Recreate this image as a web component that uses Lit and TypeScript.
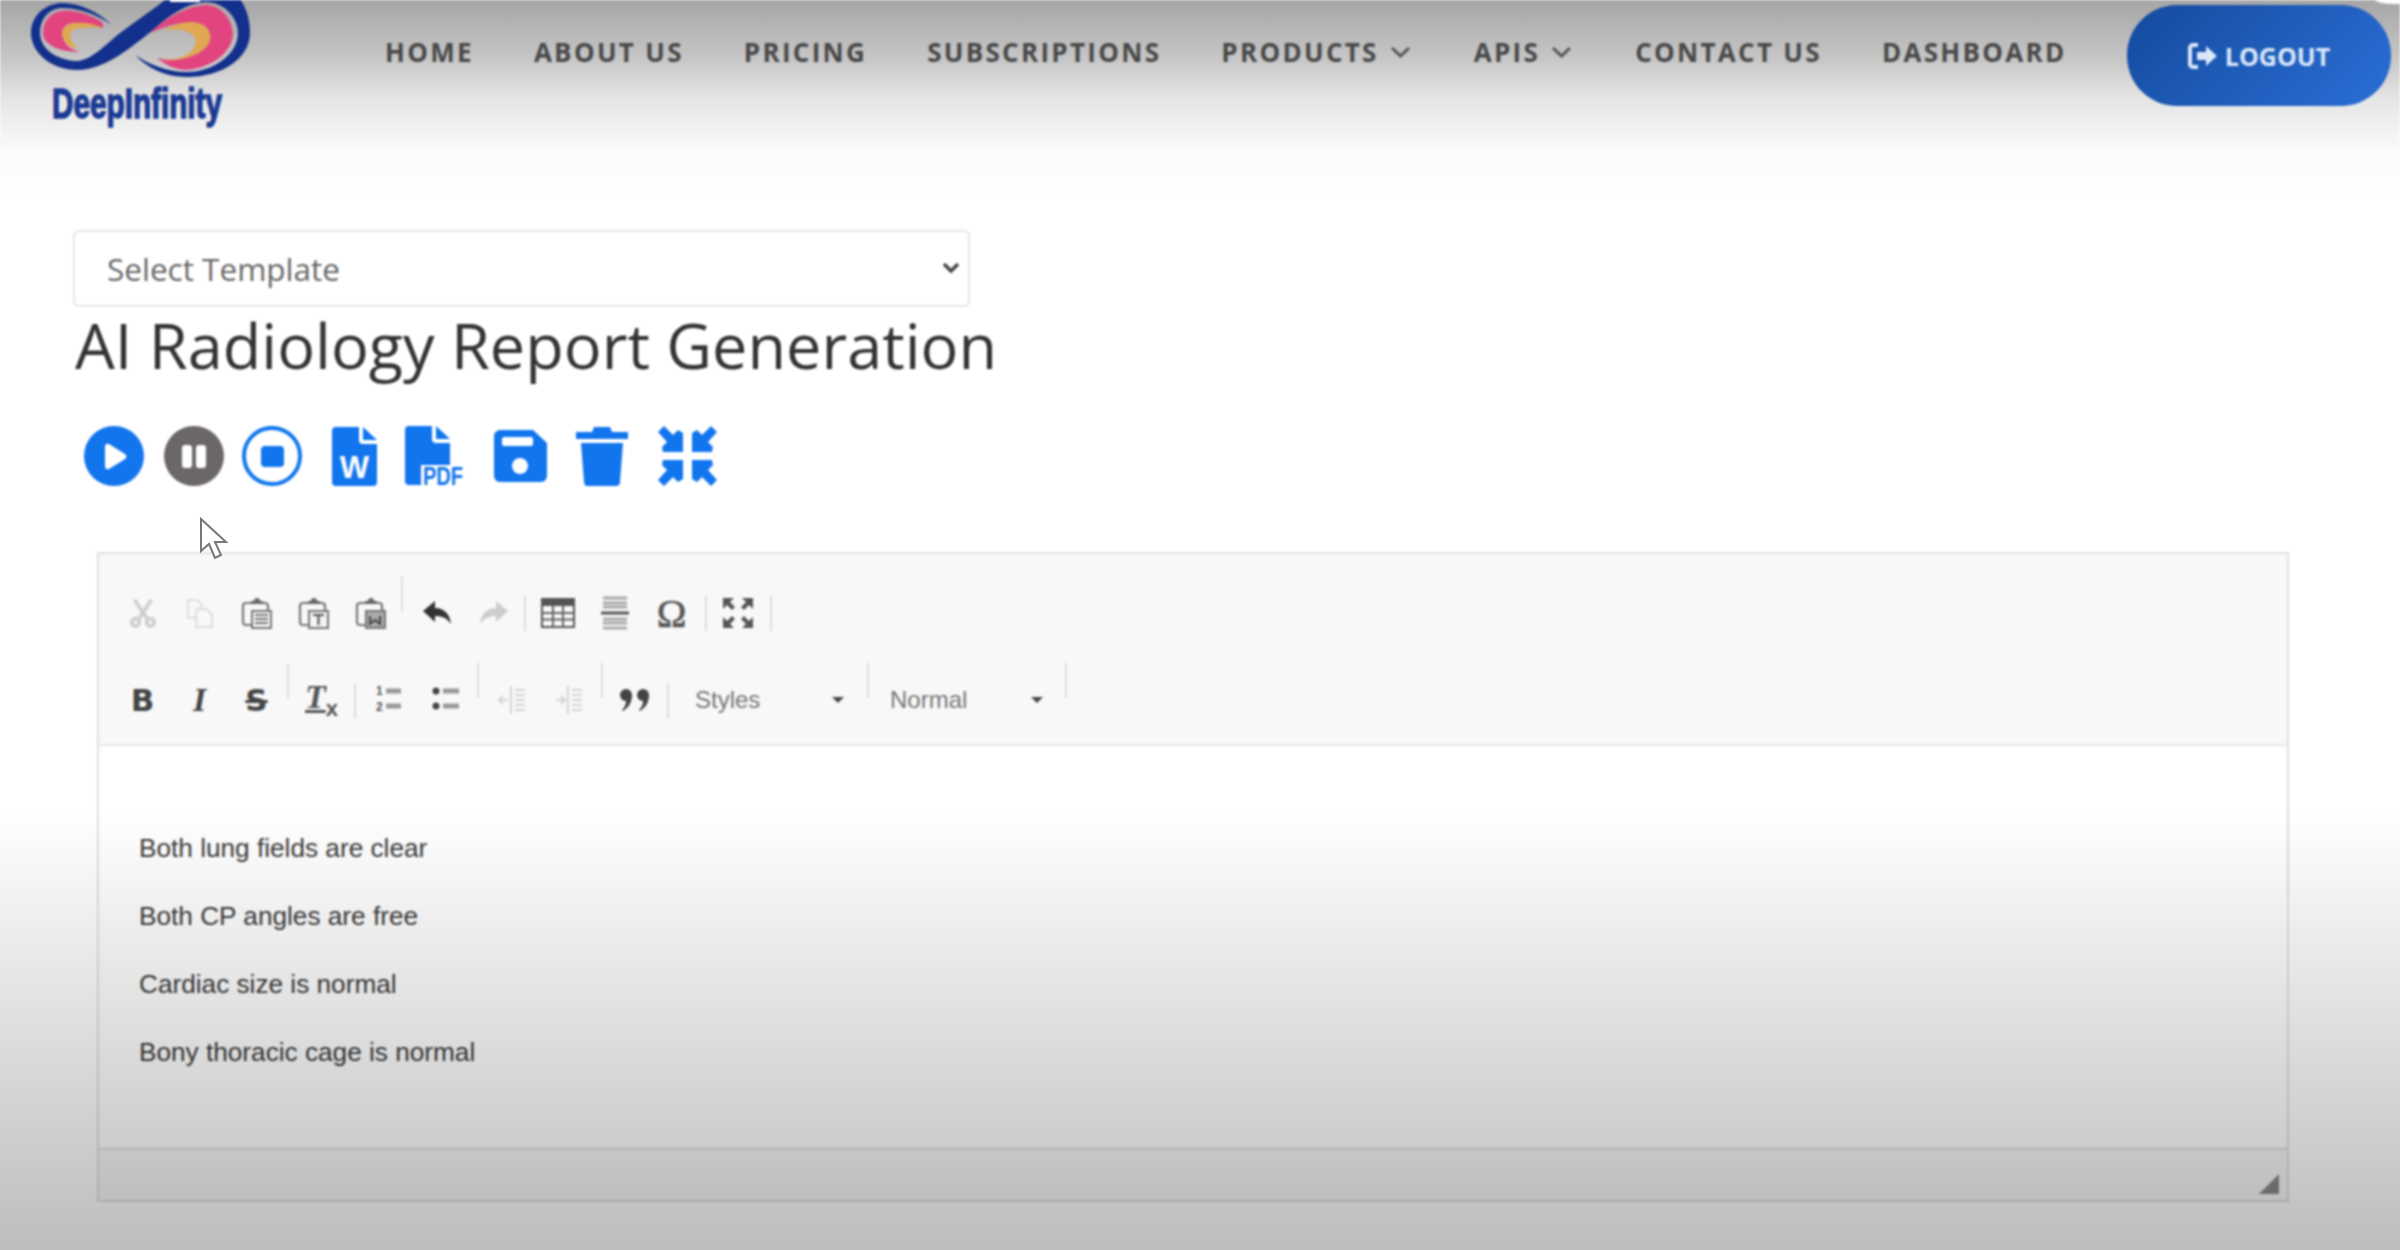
import { LitElement, html, css, svg } from "lit";
import { customElement } from "lit/decorators.js";

const ic = (w: number, h: number, vb: string, body: unknown, cls = "") =>
  html`<svg class=${cls} width=${w} height=${h} viewBox=${vb}>${body}</svg>`;

const clip = (inner: unknown) => svg`
  <path d="M5 6h5M22 6h2a3 3 0 0 1 3 3v5M5 6a3 3 0 0 0-3 3v16a3 3 0 0 0 3 3h5" fill="none" stroke="#777" stroke-width="2.2"/>
  <path d="M10 7V4h3a3 3 0 0 1 6 0h3v3z" fill="#666"/>
  <rect x="11" y="14" width="19" height="17" fill="#f4f4f4" stroke="#777" stroke-width="2"/>
  ${inner}`;

const TB: Record<string, unknown> = {
  cut: ic(30, 32, "0 0 32 32", svg`<g fill="none" stroke="#cfcfcf" stroke-width="4"><path d="M7 2l14 21M25 2L11 23"/><circle cx="8" cy="26" r="4"/><circle cx="24" cy="26" r="4"/></g>`),
  copy: ic(30, 32, "0 0 32 32", svg`<g fill="#f8f8f8" stroke="#dcdcdc" stroke-width="2"><path d="M3 2h10l5 5v14H3z"/><path d="M12 12h11l6 6v13H12z"/></g>`),
  p1: ic(32, 32, "0 0 32 32", clip(svg`<path d="M14 18h13M14 22h13M14 26h13" stroke="#777" stroke-width="2"/>`)),
  p2: ic(32, 32, "0 0 32 32", clip(svg`<path d="M15 18h11M20.500 18v10" stroke="#555" stroke-width="2.200"/>`)),
  p3: ic(32, 32, "0 0 32 32", clip(svg`<rect x="12" y="15" width="17" height="15" fill="#aaa"/><path d="M15 19v8l5-4 5 4v-8" fill="none" stroke="#444" stroke-width="2"/>`)),
  undo: ic(32, 32, "0 0 32 32", svg`<path d="M2 14L14 4v7c9 0 15 6 16 16-4-6-9-8-16-8v6z" fill="#333"/>`),
  redo: ic(32, 32, "0 0 32 32", svg`<path d="M30 14L18 4v7C9 11 3 17 2 27c4-6 9-8 16-8v6z" fill="#cdcdcd"/>`),
  table: ic(34, 30, "0 0 34 30", svg`<rect x="0" y="0" width="34" height="30" fill="#555"/><rect x="2" y="8" width="30" height="20" fill="#f8f8f8"/><path d="M12 8v20M22 8v20M2 15h30M2 21.500h30" stroke="#666" stroke-width="2"/>`),
  hr: ic(28, 34, "0 0 28 34", svg`<path d="M2 2h24M2 7h24M2 11h24M2 23h24M2 27h24M2 32h24" stroke="#aaa" stroke-width="3"/><path d="M0 17h28" stroke="#555" stroke-width="3"/>`),
  omega: html`<span class="omega">Ω</span>`,
  max: ic(32, 32, "0 0 32 32", svg`<g fill="#555"><path d="M1 1h11L8 5l5 5-3 3-5-5-4 4zM31 1H20l4 4-5 5 3 3 5-5 4 4zM1 31h11l-4-4 5-5-3-3-5 5-4-4zM31 31H20l4-4-5-5 3-3 5 5 4-4z"/></g>`),
  b: html`<span class="fmt bold">B</span>`,
  i: html`<span class="fmt ital">I</span>`,
  s: html`<span class="fmt strike">S</span>`,
  tx: html`<span class="fmt ital tx">T<sub>x</sub></span>`,
  ol: ic(28, 28, "0 0 28 28", svg`<path d="M11 5h15M11 20h15" stroke="#999" stroke-width="5"/><text x="1" y="9" class="nm">1</text><text x="1" y="25" class="nm">2</text>`),
  ul: ic(28, 28, "0 0 28 28", svg`<path d="M11 5h16M11 20h16" stroke="#999" stroke-width="5"/><circle cx="4" cy="5" r="3.500" fill="#444"/><circle cx="4" cy="20" r="3.500" fill="#444"/>`),
  out: ic(30, 30, "0 0 30 30", svg`<g stroke="#d4d4d4" stroke-width="2" fill="none"><path d="M14 1v28M18 5h10M18 10h10M18 15h10M18 20h10M18 25h10M2 15h9"/><path d="M6 11l-4 4 4 4"/></g>`),
  ind: ic(30, 30, "0 0 30 30", svg`<g stroke="#d4d4d4" stroke-width="2" fill="none"><path d="M14 1v28M18 5h10M18 10h10M18 15h10M18 20h10M18 25h10M2 15h9"/><path d="M7 11l4 4-4 4"/></g>`),
  quote: ic(32, 24, "0 0 32 24", svg`<g fill="#444"><circle cx="7" cy="7" r="6"/><path d="M13 7c0 8-4 13-9 16l-1-1c3-3 4-6 4-9z"/><circle cx="24" cy="7" r="6"/><path d="M30 7c0 8-4 13-9 16l-1-1c3-3 4-6 4-9z"/></g>`),
};

const NAV: [string, boolean][] = [
  ["HOME", false], ["ABOUT US", false], ["PRICING", false], ["SUBSCRIPTIONS", false],
  ["PRODUCTS", true], ["APIS", true], ["CONTACT US", false], ["DASHBOARD", false],
];

const DOC = "M4 0H27V13a4 4 0 0 0 4 4H45V55a4 4 0 0 1-4 4H4a4 4 0 0 1-4-4V4a4 4 0 0 1 4-4z";
const FOLD = "M31 0l14 13H31z";

@customElement("app-root")
export class AppRoot extends LitElement {
  static styles = css`
    :host { display: block; width: 2400px; height: 1250px; position: relative; overflow: hidden; background: #fff; font-family: "Open Sans", sans-serif; }
    .page { filter: blur(0.8px); height: 1250px; background: linear-gradient(#a6a6a6, #c7c7c7 60px, #e6e6e6 100px, #f7f7f7 143px, #fbfbfb 147px, #fff 200px); }
    header { height: 145px; display: flex; align-items: flex-start; }
    .logo { flex: none; display: block; }
    nav { display: flex; gap: 60px; margin-left: 125px; margin-top: 31px; align-items: center; height: 42px; }
    .nav-item { font-size: 26px; font-weight: 700; letter-spacing: 2.300px; color: #484848; display: flex; align-items: center; gap: 11px; white-space: nowrap; font-family: "Open Sans", sans-serif; }
    .nav-item.has-chev { margin-right: 3px; }
    .logout { position: absolute; left: 2127px; top: 5px; width: 264px; height: 101px; border-radius: 50px; background: linear-gradient(135deg, #144a9e, #2a6fd6); color: #dbe7fa; display: flex; align-items: center; justify-content: center; gap: 7px; font-size: 25px; font-weight: 700; box-sizing: border-box; }
    .spot { position: absolute; background: #fff; border-radius: 50%; }
    .spot.a { left: 2375px; top: -5px; width: 40px; height: 9px; }
    .body { padding-left: 73px; padding-top: 85px; }
    .select-wrap { position: relative; width: 897px; height: 77px; }
    select { appearance: none; width: 100%; height: 100%; border: 2px solid #e6e6e6; border-radius: 6px; background: #fff; font: 400 31.500px "Open Sans", sans-serif; color: #666; padding: 0 32px; }
    .chev { position: absolute; right: 9px; top: 31px; pointer-events: none; }
    h1 { margin: 0; font: 400 63px/76px "Open Sans", sans-serif; color: #333; padding-left: 2px; }
    .actions { display: flex; align-items: center; margin: 43px 0 0 11px; height: 60px; }
    .actions svg { display: block; flex: none; }
    .gap-20 { margin-left: 20px; } .gap-18 { margin-left: 18px; } .gap-30 { margin-left: 30px; } .gap-28 { margin-left: 28px; } .gap-29 { margin-left: 29px; }
    .editor { margin: 66px 0 0 24px; width: 2192px; border: 2px solid #e0e0e0; box-sizing: border-box; height: 650px; display: flex; flex-direction: column; font-family: "Liberation Sans", Arial, sans-serif; background: #fff; }
    .toolbar { background: #f8f8f8; height: 192px; flex: none; box-sizing: border-box; padding: 31px 0 0 15px; border-bottom: 2px solid #e8e8e8; }
    .row { display: flex; align-items: center; height: 56px; }
    .row + .row { margin-top: 31px; }
    .btn { width: 57px; height: 56px; flex: none; display: flex; align-items: center; justify-content: center; color: #474747; }
    .sep { width: 2px; height: 35px; background: #dcdcdc; flex: none; }
    .up { margin-bottom: 40px; }
    .omega { font: 400 40px "Liberation Serif", serif; color: #555; -webkit-text-stroke: 0.6px #555; }
    .fmt { font-size: 32px; line-height: 1; color: #444; }
    .bold { font-weight: 700; font-family: "DejaVu Sans", sans-serif; font-size: 31px; }
    .ital { font: italic 700 34px "Liberation Serif", serif; }
    .strike { font-family: "DejaVu Sans", sans-serif; font-weight: 700; font-size: 31px; text-decoration: line-through; }
    .tx { text-decoration: underline; color: #555; }
    .tx sub { font: 700 22px "Liberation Sans", sans-serif; }
    .combo { height: 56px; flex: none; display: flex; align-items: center; justify-content: space-between; box-sizing: border-box; font-size: 24px; color: #777; }
    .caret { width: 0; height: 0; border: 6px solid transparent; border-top-color: #444; border-bottom: 0; }
    .nm { font: 700 12px "Liberation Sans", sans-serif; fill: #555; }
    .content { flex: 1; padding: 84px 40px 0; font-size: 26.200px; color: #3c3c3c; }
    .content p { margin: 0 0 32px; line-height: 36px; }
    .status { height: 52px; flex: none; background: #f8f8f8; border-top: 2px solid #e0e0e0; box-sizing: border-box; display: flex; justify-content: flex-end; align-items: flex-end; padding: 0 8px 6px 0; }
    .shade { position: absolute; left: 0; width: 2400px; pointer-events: none; top: 810px; height: 440px; background: linear-gradient(rgba(0,0,0,0), rgba(0,0,0,.26)); }
    .cursor { position: absolute; left: 198px; top: 517px; pointer-events: none; }
  `;

  private sep(up = false, ml = 3, mr = 4) {
    return html`<i class="sep ${up ? "up" : ""}" style="margin-left:${ml}px;margin-right:${mr}px"></i>`;
  }
  private btn(k: string) { return html`<div class="btn">${TB[k]}</div>`; }

  render() {
    return html`
      <div class="page">
        <header>
          <svg class="logo" width="260" height="130" viewBox="0 0 260 130" aria-label="DeepInfinity logo">
            <path d="M112 25C98 12 80 3 62 3C42 4 31 18 31 33C31 53 52 70 77 70C105 70 130 48 153 30C170 15 185 4 205 2C225 2 238 18 238 33C238 55 212 72 187 72C168 72 150 65 135 55C148 68 165 77 187 77C222 77 250 58 250 33C250 15 244 3 236-6L172-6C160 5 140 18 120 33C105 45 92 60 77 61C55 60 40 48 40 33C40 18 50 8 62 8C80 8 98 15 112 25Z" fill="#12308c"/>
            <path d="M150 33C165 18 185 7 205 5C222 5 232 20 233 33C233 52 212 68 187 70C175 70 165 65 157 58C175 62 195 58 205 48C215 38 210 25 197 23C180 21 165 27 150 33Z" fill="#e2447f"/>
            <path d="M165 30C175 24 190 20 197 23C210 25 215 40 205 48C195 58 175 62 160 60C175 60 185 57 190 52C198 45 198 38 190 33C183 29 175 29 165 30Z" fill="#e0a850"/>
            <path d="M103 23C90 14 75 10 63 11C50 12 43 22 43 33C43 45 60 52 80 52C70 50 62 42 62 33C62 26 70 22 77 23C88 24 96 26 103 28Z" fill="#e2447f"/>
            <path d="M103 28C95 24 85 22 77 23C68 23 62 28 62 33C62 40 68 47 78 49C73 44 69 38 70 33C72 29 78 28 84 28C90 27 97 27 103 28Z" fill="#e0a850"/>
            <rect x="170" y="0" width="30" height="2" fill="#fff"/>
            <text x="52" y="118" textLength="170" lengthAdjust="spacingAndGlyphs" font-family="Liberation Sans Narrow, Liberation Sans, sans-serif" font-weight="700" font-size="42" fill="#1b3a94" stroke="#1b3a94" stroke-width="1.500">DeepInfinity</text>
          </svg>
          <nav>
            ${NAV.map(([t, c]) => html`<span class="nav-item ${c ? "has-chev" : ""}">${t}${c ? html`<svg width="21" height="12" viewBox="0 0 21 12"><path d="M2 2l8.500 8L19 2" fill="none" stroke="#555" stroke-width="3"/></svg>` : ""}</span>`)}
          </nav>
          <div class="logout">
            <svg width="30" height="28" viewBox="0 0 30 28"><path d="M10 3H5a3 3 0 0 0-3 3v16a3 3 0 0 0 3 3h5" fill="none" stroke="currentColor" stroke-width="4"/><path d="M9 10h9V4l11 10-11 10v-6H9z" fill="currentColor"/></svg>
            LOGOUT
          </div>
          <i class="spot a"></i>
        </header>
        <div class="body">
          <div class="select-wrap">
            <select><option>Select Template</option></select>
            <svg class="chev" width="20" height="14" viewBox="0 0 20 14"><path d="M3 3l7 7 7-7" fill="none" stroke="#444" stroke-width="3.500"/></svg>
          </div>
          <h1>AI Radiology Report Generation</h1>
          <div class="actions">
            <svg width="60" height="60" viewBox="0 0 60 60"><circle cx="30" cy="30" r="30" fill="#1175ee"/><path d="M21 20a3 3 0 0 1 4-2l16 10a3 3 0 0 1 0 5L25 43a3 3 0 0 1-4-2z" fill="#fff"/></svg>
            <svg class="gap-20" width="60" height="60" viewBox="0 0 60 60"><circle cx="30" cy="30" r="30" fill="#6b6766"/><rect x="18" y="19" width="10" height="23" rx="3" fill="#fff"/><rect x="32" y="19" width="10" height="23" rx="3" fill="#fff"/></svg>
            <svg class="gap-18" width="60" height="60" viewBox="0 0 60 60"><circle cx="30" cy="30" r="28" fill="none" stroke="#1175ee" stroke-width="4"/><rect x="19" y="20" width="23" height="21" rx="4" fill="#1175ee"/></svg>
            <svg class="gap-30" width="45" height="59" viewBox="0 0 45 59"><path d=${DOC} fill="#1175ee"/><path d=${FOLD} fill="#1175ee"/><text x="22.500" y="51" text-anchor="middle" font-family="Liberation Sans" font-weight="700" font-size="31" fill="#fff">W</text></svg>
            <svg class="gap-28" width="60" height="60" viewBox="0 0 60 60"><path d=${DOC} fill="#1175ee"/><path d=${FOLD} fill="#1175ee"/><rect x="16" y="39" width="44" height="21" fill="#fff"/><text x="18" y="59" textLength="40" lengthAdjust="spacingAndGlyphs" font-family="Liberation Sans Narrow, Liberation Sans" font-weight="700" font-size="26" fill="#1175ee">PDF</text></svg>
            <svg class="gap-29" width="53" height="52" viewBox="0 0 53 52"><path d="M6 0H39L53 13V46a6 6 0 0 1-6 6H6a6 6 0 0 1-6-6V6a6 6 0 0 1 6-6z" fill="#1175ee"/><rect x="8" y="7" width="31" height="9" rx="2" fill="#fff"/><circle cx="26" cy="36" r="8" fill="#fff"/></svg>
            <svg class="gap-29" width="52" height="60" viewBox="0 0 52 60"><path d="M1 6h15l2-5h16l2 5h15a1 1 0 0 1 0 7H1a1 1 0 0 1 0-7zM5 17H47L44 56a4 4 0 0 1-4 4H12a4 4 0 0 1-4-4z" fill="#1175ee"/></svg>
            <svg class="gap-30" width="59" height="60" viewBox="0 0 59 60"><g fill="#1175ee"><path d="M6 0l9 9 5-5 5 3v19H5l-1-5 5-5L0 6zM53 0l-9 9-5-5-5 3v19h20l1-5-5-5 9-10zM6 60l9-9 5 5 5-3V34H5l-1 5 5 5-9 10zM53 60l-9-9-5 5-5-3V34h20l1 5-5 5 9 10z"/></g></svg>
          </div>
          <div class="editor">
            <div class="toolbar">
              <div class="row">
                ${["cut", "copy", "p1", "p2", "p3"].map((k) => this.btn(k))}
                ${this.sep(true, 2, 5)}
                ${["undo", "redo"].map((k) => this.btn(k))}
                ${this.sep(false, 2, 3)}
                ${["table", "hr", "omega"].map((k) => this.btn(k))}
                ${this.sep(false, 5, 2)}
                ${this.btn("max")}
                ${this.sep(false, 4, 0)}
              </div>
              <div class="row">
                ${["b", "i", "s"].map((k) => this.btn(k))}
                ${this.sep(true, 2, 4)}
                ${this.btn("tx")}
                ${this.sep(false, 4, 4)}
                ${["ol", "ul"].map((k) => this.btn(k))}
                ${this.sep(true, 3, 4)}
                ${["out", "ind"].map((k) => this.btn(k))}
                ${this.sep(true, 4, 3)}
                ${this.btn("quote")}
                ${this.sep(false, 4, 4)}
                <div class="combo" style="width:191px;padding:0 20px 0 22px"><span>Styles</span><i class="caret"></i></div>
                ${this.sep(true, 3, 3)}
                <div class="combo" style="width:191px;padding:0 20px 0 18px"><span>Normal</span><i class="caret"></i></div>
                ${this.sep(true, 2, 0)}
              </div>
            </div>
            <div class="content">
              <p>Both lung fields are clear</p>
              <p>Both CP angles are free</p>
              <p>Cardiac size is normal</p>
              <p>Bony thoracic cage is normal</p>
            </div>
            <div class="status">
              <svg width="20" height="20" viewBox="0 0 20 20"><path d="M20 0V20H0z" fill="#8a8a8a"/></svg>
            </div>
          </div>
        </div>
      </div>
      <div class="shade"></div>
      <svg class="cursor" width="32" height="44" viewBox="0 0 32 44"><path d="M3 2V34L11 27L17 41L23 38L17 25H28z" fill="#fff" stroke="#777" stroke-width="2"/></svg>
    `;
  }
}
